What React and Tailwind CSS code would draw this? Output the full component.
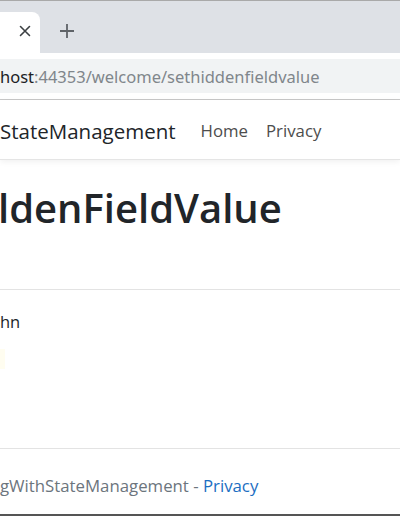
export default function App() {
  const ui = { fontFamily: '"Noto Sans", "Open Sans", sans-serif' };
  return (
    <div className="w-[400px] h-[516px] overflow-hidden bg-white flex flex-col relative" style={ui}>
      {/* top border */}
      <div className="h-[1px] bg-[#a9a9a9] shrink-0" />
      {/* tab strip */}
      <div className="h-[52px] bg-[#dee1e6] flex items-end shrink-0">
        <div className="w-[40px] h-[41px] bg-white rounded-tr-[8px] flex items-center justify-end pr-[9px]">
          <svg width="12" height="12" viewBox="0 0 12 12" className="mt-[-3px]">
            <path d="M1.5 1.5 L10.5 10.5 M10.5 1.5 L1.5 10.5" stroke="#3c4043" strokeWidth="1.6" strokeLinecap="round" />
          </svg>
        </div>
        <div className="w-[54px] h-[41px] flex items-center justify-center">
          <svg width="16" height="16" viewBox="0 0 16 16" className="mt-[-3px]">
            <path d="M8 1 V15 M1 8 H15" stroke="#5f6368" strokeWidth="1.8" />
          </svg>
        </div>
      </div>
      {/* toolbar */}
      <div className="h-[46px] bg-white flex items-center shrink-0">
        <div className="w-full h-[34px] bg-[#f1f3f4] flex items-center text-[16.5px] pt-[2px]">
          <span className="text-[#202124]">host</span>
          <span className="text-[#80868b]">:44353/welcome/sethiddenfieldvalue</span>
        </div>
      </div>
      <div className="h-[1px] bg-[#c8c8c8] shrink-0" />
      {/* page */}
      <div className="flex-1 flex flex-col" style={{ fontFamily: '"Open Sans", "Noto Sans", sans-serif' }}>
        <nav className="h-[60px] shrink-0 flex items-center pt-[3px] border-b border-[#e5e5e5] shadow-[0_2px_6px_rgba(0,0,0,0.06)]">
          <span className="text-[20.5px] text-[#212529] mr-[25px]">StateManagement</span>
          <span className="text-[16.8px] text-[#4d4d4d] mr-[18px]">Home</span>
          <span className="text-[16.8px] text-[#4d4d4d]">Privacy</span>
        </nav>
        <h1 className="text-[40px] leading-[48px] font-semibold text-[#212529] mt-[24px] ml-[-2px] whitespace-nowrap">ldenFieldValue</h1>
        <div className="mt-[57px] h-[1px] bg-[#e3e3e3]" />
        <div className="mt-[20px] text-[16.5px] text-[#212529]">hn</div>
        <div className="mt-[14px] w-[5px] h-[20px] bg-[#fffdf0]" />
        <div className="mt-[79px] h-[1px] bg-[#e3e3e3]" />
        <div className="mt-[24px] text-[16.8px] text-[#6c757d] whitespace-nowrap">
          gWithStateManagement - <span className="text-[#1b6ec2]">Privacy</span>
        </div>
      </div>
      <div className="absolute bottom-0 left-0 right-0 h-[2px] bg-[#555]" />
    </div>
  );
}
